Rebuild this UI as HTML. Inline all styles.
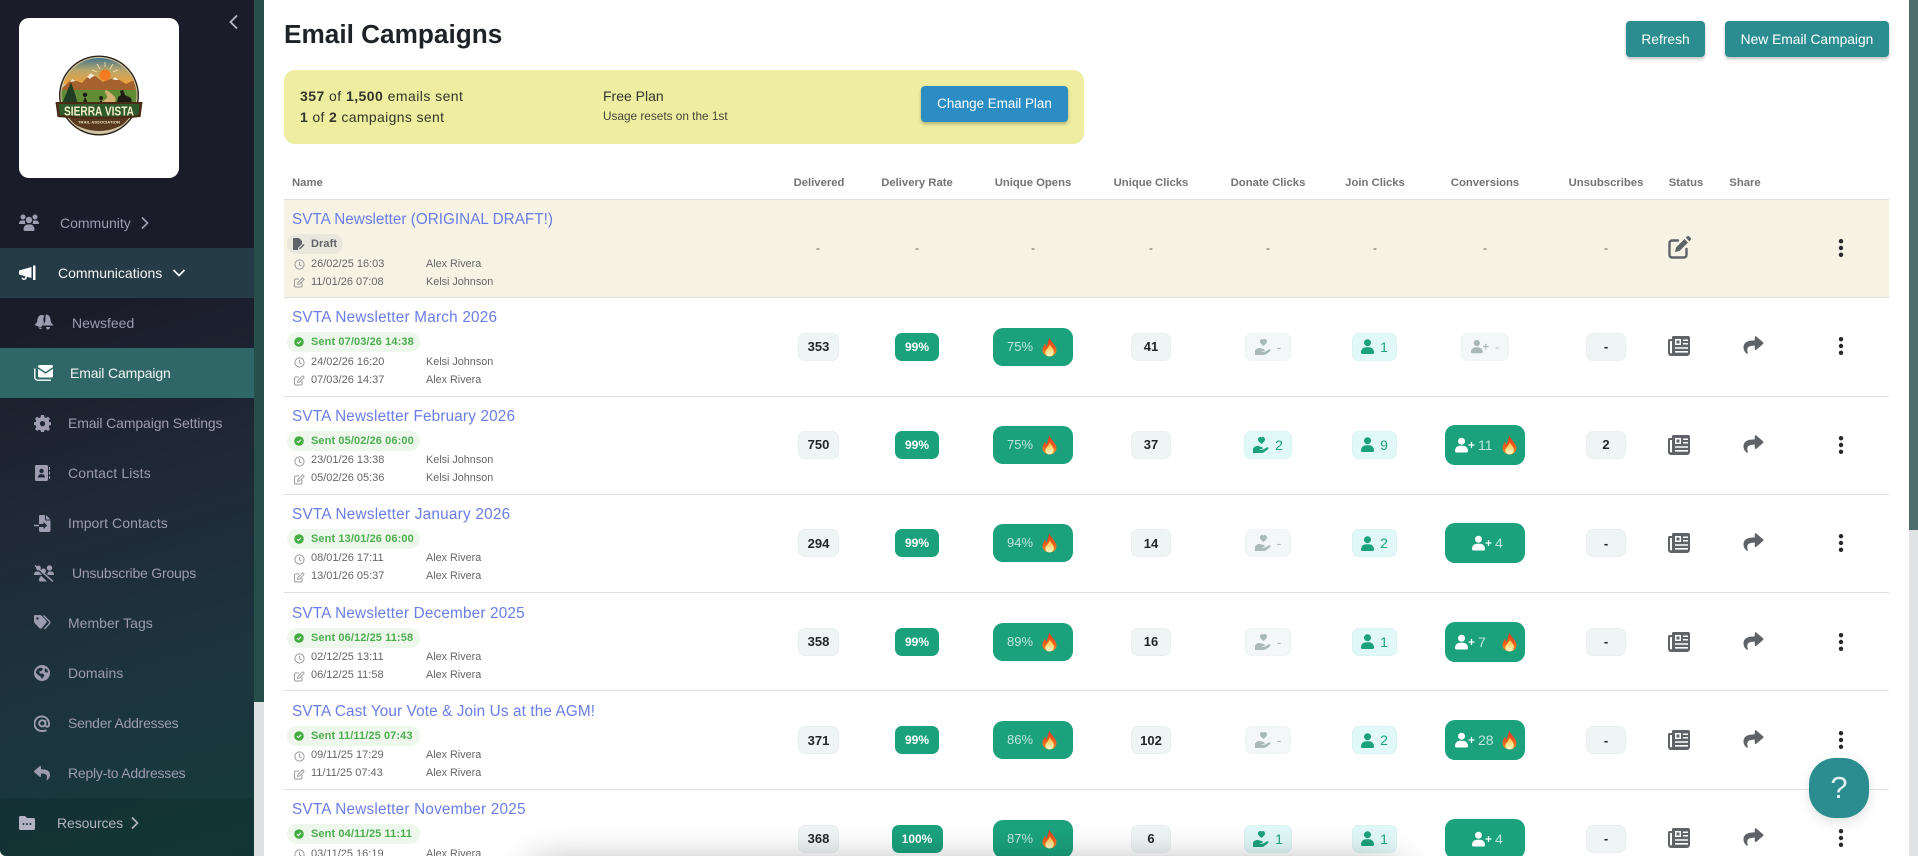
<!DOCTYPE html>
<html lang="en">
<head>
<meta charset="utf-8">
<title>Email Campaigns</title>
<style>
*{box-sizing:border-box}
html,body{margin:0;padding:0;width:1918px;height:856px;background:#fff;font-family:"Liberation Sans",sans-serif}
#page{position:relative;width:1918px;height:856px;overflow:hidden;background:#fff}
.abs{position:absolute}
#side{position:absolute;left:0;top:0;width:254px;height:856px;background:linear-gradient(163deg,#1b1b29 0%,#1b1c2a 36%,#202a37 58%,#1d333c 75%,#143c3c 100%);border-bottom-left-radius:6px;overflow:hidden}
.st{position:absolute;font-size:14px;line-height:20px;color:#9d9cb1;white-space:nowrap}
.w{color:#f4f5f6}
.si{position:absolute;fill:#9d9cb1}
.r{position:absolute;left:0;width:1918px;height:98.4px}
.ln{position:absolute;left:284px;width:1605px;height:1px;background:#e0e0e0}
.ti{position:absolute;left:292px;top:11px;font-size:15.300px;line-height:20px;color:#6a7de6;white-space:nowrap}
.pl{position:absolute;left:287px;top:35px;height:20px;border-radius:10px;background:#eef7ec;width:133px}
.pl span{position:absolute;left:24px;top:0;font-size:11px;line-height:21px;font-weight:bold;color:#4eae50;white-space:nowrap;letter-spacing:.1px}
.pl svg{position:absolute;left:7px;top:5px}
.m{position:absolute;font-size:11px;line-height:14px;color:#666;white-space:nowrap}
.m1{top:57.200px}.m2{top:75.200px}
.dt{left:311px}.nm{left:426px;font-size:10.800px}
.ci{position:absolute;left:294px}
.c1{top:60px}.c2{top:78px}
.c{position:absolute;top:35.200px;height:28px;border-radius:7px;display:flex;align-items:center;justify-content:center;font-size:13px;font-weight:bold;color:#23262a;background:#eff4f4;border:1px solid #e9efef}
.d1{left:798px;width:41px}
.d2{left:895px;width:44px;background:#1ba27d;border:0;color:#fff;font-size:12px}
.d4{left:1131px;width:40px}
.d8{left:1586px;width:40px}
.hd,.hg{left:1244px;width:48px;gap:6px;font-weight:normal;font-size:14px}
.hd{background:#e0f8f7;border-color:#d9f4f2;color:#1ba27d}
.hg{background:#f4f7f7;border-color:#eff3f3;color:#a9bab6;left:1245px;width:46px}
.j{left:1352px;width:45px;background:#e0f8f7;border-color:#d9f4f2;color:#1ba27d;gap:6px;font-size:14px;font-weight:normal}
.pg{left:1461px;width:48px;background:#f4f7f7;border-color:#eff3f3;color:#a9bab6;gap:6px;font-size:12px;font-weight:normal}
.o{position:absolute;left:993px;top:30.200px;width:80px;height:38px;border-radius:10px;background:#1ba27d}
.o span{position:absolute;left:14px;top:0;line-height:38px;font-size:13px;color:#bfe6da}
.o svg{position:absolute;left:49px;top:9px}
.p{position:absolute;left:1445px;top:29.200px;width:80px;height:40px;border-radius:10px;background:#1ba27d}
.p span{position:absolute;top:0;line-height:40px;font-size:14px;color:#bfe6da}
.p .f{position:absolute;left:57px;top:10px}
.p .u{position:absolute;left:10px;top:12px}
.p.nf .u{left:27px}
.nws{position:absolute;left:1668px;top:39px}
.shr{position:absolute;left:1743px;top:38px}
.dot{position:absolute;left:1837px;top:40px}
.h{position:absolute;top:176px;width:120px;text-align:center;font-size:11.300px;line-height:14px;font-weight:bold;color:#737373;white-space:nowrap}
.dash{position:absolute;top:42px;width:40px;text-align:center;font-size:12px;line-height:14px;color:#555}
.btn{position:absolute;border-radius:4px;color:#fff;font-size:13.800px;display:flex;align-items:center;justify-content:center;background:#2b8d8f;box-shadow:0 2px 3px rgba(0,0,0,.25)}
</style>
</head>
<body>
<div id="page">
<svg width="0" height="0" style="position:absolute">
<defs>
<linearGradient id="fg" x1="0" y1="0" x2="0" y2="1"><stop offset="0" stop-color="#e2381f"/><stop offset=".6" stop-color="#f0601e"/><stop offset="1" stop-color="#fa9a22"/></linearGradient>
<linearGradient id="fy" x1="0" y1="0" x2="0" y2="1"><stop offset="0" stop-color="#fcc02e"/><stop offset="1" stop-color="#fffbd0"/></linearGradient>
<symbol id="fire" viewBox="0 0 16 20"><path fill="url(#fg)" d="M8 0C9 4 14 7 15.300 12C16.200 17 12.400 20 8 20C3.800 20 -.2 17 .6 12C1 9.600 2.400 8 3 6.200C3.900 7.600 4.400 8.800 5 9.600C6 7 6.400 3 8 0Z"/><path fill="url(#fy)" d="M8.200 7C9.600 10 13.200 12.500 12.600 16C12 19 10 20 8 20C5.700 20 3.400 18.400 3.600 15.600C3.800 13 7.400 11 8.200 7Z"/></symbol>
<symbol id="clock" viewBox="0 0 11 11"><circle cx="5.500" cy="5.500" r="4.600" fill="none" stroke="#9a9a9a" stroke-width="1"/><path d="M5.500 2.800V5.800L7.600 7" fill="none" stroke="#9a9a9a" stroke-width="1"/></symbol>
<symbol id="edit" viewBox="0 0 11 11"><path d="M8 5.800V9a1 1 0 0 1-1 1H1.500a1 1 0 0 1-1-1V3a1 1 0 0 1 1-1H5" fill="none" stroke="#9a9a9a" stroke-width="1"/><path d="M3.600 7.400L4 5.400L8.600 .8L10.200 2.400L5.600 7Z" fill="none" stroke="#9a9a9a" stroke-width=".9"/></symbol>
<symbol id="chk" viewBox="0 0 10 10"><circle cx="5" cy="5" r="4.800" fill="#44ad42"/><path d="M2.900 5.100L4.400 6.500L7.100 3.700" fill="none" stroke="#fff" stroke-width="1.100"/></symbol>
<symbol id="news" viewBox="0 0 22 20"><path fill="#5f6368" d="M5.500 0H20a2 2 0 0 1 2 2V17a3 3 0 0 1-3 3H3a3 3 0 0 1-3-3V4.500a1.500 1.500 0 0 1 1.500-1.500H4V1.500A1.500 1.500 0 0 1 5.500 0Z"/><path fill="#fff" d="M2 5H4V16.500a1 1 0 0 1-2 0ZM7 3H13V9H7ZM15 3.500H20V5H15ZM15 7H20V8.500H15ZM7 11.200H20V12.800H7ZM7 15H20V16.600H7Z"/><path fill="#5f6368" d="M8.500 4.500H11.500V7.500H8.500Z"/></symbol>
<symbol id="share" viewBox="0 0 512 512"><path fill="#5f6368" d="M503.691 189.836L327.687 37.851C312.281 24.546 288 35.347 288 56.015v80.053C127.371 137.907 0 170.1 0 322.326c0 61.441 39.581 122.309 83.333 154.132 13.653 9.931 33.111-2.533 28.077-18.631C66.066 312.814 132.917 274.316 288 272.085V360c0 20.7 24.3 31.453 39.687 18.164l176.004-152c11.071-9.562 11.086-26.753 0-36.328z"/></symbol>
<symbol id="dots" viewBox="0 0 8 18"><circle cx="4" cy="2.200" r="2.200" fill="#26282c"/><circle cx="4" cy="9" r="2.200" fill="#26282c"/><circle cx="4" cy="15.800" r="2.200" fill="#26282c"/></symbol>
<symbol id="hand" viewBox="0 0 16 18"><path d="M8.500 8C6.500 6.400 5 5.200 5 3.400C5 1.900 6.100 1 7.200 1C7.800 1 8.200 1.300 8.500 1.700C8.800 1.300 9.200 1 9.800 1C10.900 1 12 1.900 12 3.400C12 5.200 10.500 6.400 8.500 8Z" fill="currentColor"/><path fill="currentColor" d="M0 12.500C1.500 10.200 4 9.500 6.500 10.400L9 11.200C10.200 11.600 9.800 13.200 8.600 13H6.800V13.600H10L13.800 11.400C15.200 10.800 16.200 12.300 15 13.300L11 16.300C10.300 16.800 9.600 17 8.800 17H0Z"/></symbol>
<symbol id="user" viewBox="0 0 13 15"><circle cx="6.500" cy="3.700" r="3.500" fill="currentColor"/><path fill="currentColor" d="M0 13.500C0 10.300 2.500 8.300 5 8.300H8C10.500 8.300 13 10.300 13 13.500C13 14.400 12.400 15 11.600 15H1.400C.6 15 0 14.400 0 13.500Z"/></symbol>
<symbol id="userp" viewBox="0 0 20 15"><circle cx="6.500" cy="3.700" r="3.500" fill="currentColor"/><path fill="currentColor" d="M0 13.500C0 10.300 2.500 8.300 5 8.300H8C10.500 8.300 13 10.300 13 13.500C13 14.400 12.400 15 11.600 15H1.400C.6 15 0 14.400 0 13.500Z"/><path d="M16.500 4.500V10.500M13.500 7.500H19.500" stroke="currentColor" stroke-width="1.300"/></symbol>
</defs>
</svg>

<!-- sidebar -->
<div id="side">
  <div style="position:absolute;left:19px;top:18px;width:160px;height:160px;background:#fff;border-radius:10px"></div>
  <svg style="position:absolute;left:19px;top:18px" width="160" height="160" viewBox="19 18 160 160">
    <defs>
      <clipPath id="lc"><circle cx="99" cy="95.500" r="37.500"/></clipPath>
      <linearGradient id="sky" x1="0" y1="0" x2="0" y2="1"><stop offset="0" stop-color="#2f6f94"/><stop offset=".5" stop-color="#b7a66a"/><stop offset="1" stop-color="#f0a13c"/></linearGradient>
    </defs>
    <circle cx="99" cy="95.500" r="40" fill="#2b2219"/>
    <circle cx="99" cy="95.500" r="38.600" fill="#cfc4a4"/>
    <g clip-path="url(#lc)">
      <rect x="60" y="56" width="78" height="28" fill="url(#sky)"/>
      <circle cx="105" cy="75" r="5.500" fill="#f47b20"/>
      <path d="M105 62V67M97 64L100 69M113 64L110 69M92 70L97 72M118 70L113 72" stroke="#f6e6b0" stroke-width=".8"/>
      <path d="M60 90L72 79L82 83L91 73L103 82L115 77L126 84L134 80L140 92V96H60Z" fill="#a5622f"/>
      <path d="M87 77L91 73L95 76L92 77L90 79ZM112 79L115 77L119 80L115 80ZM76 81L72 79L70 82Z" fill="#efe6d2"/>
      <rect x="60" y="90" width="78" height="20" fill="#5f8c34"/>
      <path d="M106 90C102 93 110 95 106 99C101 103 94 105 90 110H116C112 104 118 100 114 96C112 94 110 92 106 90Z" fill="#d3b070"/>
      <path d="M71 82L75 94L78 104H62L66 94Z" fill="#1f3d22"/>
      <path d="M85 97a2.200 2.200 0 1 1 .1 0L90 108H81ZM101 100a2 2 0 1 1 .1 0L106 108H95Z" fill="#1e1a14"/>
      <path d="M116 108L118 97L121 95L120 91L123 90L125 95L131 98L133 108Z" fill="#1e1a14"/>
    </g>
    <path d="M62 116Q99 146 136 116V112H62Z" fill="#5a3a1e" clip-path="url(#lc)"/>
    <path d="M55.500 102L142.500 102L140.500 117Q99 121 57.500 117Z" fill="#4a2c16"/>
    <path d="M58.500 104L139.500 104L138.300 115Q99 118.500 59.700 115Z" fill="#2f5a2a"/>
    <text x="99" y="115.500" text-anchor="middle" font-family="Liberation Sans" font-weight="bold" font-size="12.500" fill="#f3edc6" textLength="70" lengthAdjust="spacingAndGlyphs">SIERRA VISTA</text>
    <text x="99" y="123.500" text-anchor="middle" font-family="Liberation Sans" font-weight="bold" font-size="4" fill="#e8dfc0" textLength="42" lengthAdjust="spacingAndGlyphs">TRAIL ASSOCIATION</text>
  </svg>
  <svg style="position:absolute;left:228px;top:14px" width="11" height="16" viewBox="0 0 11 16"><path d="M9 1.500L2.500 8L9 14.500" fill="none" stroke="#b6b6c2" stroke-width="1.800"/></svg>

  <div style="position:absolute;left:0;top:248px;width:254px;height:50px;background:#253b45"></div>
  <div style="position:absolute;left:0;top:348px;width:254px;height:50px;background:#2f6666"></div>
  <div style="position:absolute;left:0;top:798px;width:254px;height:58px;background:rgba(10,30,32,.22)"></div>

  <!-- community -->
  <svg class="si" style="left:19px;top:214px" width="20" height="18" viewBox="0 0 20 18"><circle cx="4" cy="3" r="2.500"/><circle cx="16" cy="3" r="2.500"/><circle cx="10" cy="6" r="3.200"/><path d="M0 9.500C0 7.500 1.500 6.500 3 6.500H5C5.500 6.500 6 6.700 6.200 7C5.800 8 6 9 6.500 10H1C.5 10 0 10 0 9.500ZM20 9.500C20 7.500 18.500 6.500 17 6.500H15C14.500 6.500 14 6.700 13.800 7C14.200 8 14 9 13.500 10H19C19.500 10 20 10 20 9.500ZM4.500 15.500C4.500 12.500 6.500 10.500 8.500 10.500H11.500C13.500 10.500 15.500 12.500 15.500 15.500C15.500 16.500 15 17 14 17H6C5 17 4.500 16.500 4.500 15.500Z"/></svg>
  <div class="st" style="left:60px;top:213px">Community</div>
  <svg style="position:absolute;left:140px;top:216px" width="10" height="14" viewBox="0 0 10 14"><path d="M2 1.500L7.500 7L2 12.500" fill="none" stroke="#9d9cb1" stroke-width="1.700"/></svg>

  <!-- communications -->
  <svg style="position:absolute;left:19px;top:265px" width="19" height="16" viewBox="0 0 19 16"><path fill="#fff" d="M0 5.500L12.500 2V13L8 11.800C8 14 6.500 15 5 15C3.500 15 2.700 14 2.500 12.500L4.200 12.900C4.300 13.500 4.700 13.600 5 13.600C5.700 13.600 6.300 13 6.300 11.300L0 9.500ZM14 .5H16.500V15H14Z"/></svg>
  <div class="st w" style="left:58px;top:263px">Communications</div>
  <svg style="position:absolute;left:172px;top:268px" width="14" height="10" viewBox="0 0 14 10"><path d="M1.500 2L7 7.500L12.500 2" fill="none" stroke="#f4f5f6" stroke-width="1.700"/></svg>

  <!-- newsfeed -->
  <svg class="si" style="left:34px;top:314px" width="20" height="16" viewBox="0 0 20 16"><path d="M8 1C4.500 1 3.500 4 3.300 6.500C3.200 8.500 1.500 10 .5 11L7 13.500C8 12 9 10 10 9C9.200 7 9 4 10.500 1.800C9.800 1.300 9 1 8 1Z"/><path d="M12 .5C15 .5 16.400 3 16.600 6.500C16.700 8.500 18.500 10 19.500 11.500H8.500C9.500 10 11.300 8.500 11.400 6.500C11.400 5 11.400 2 12 .5ZM12 13H16C16 14.500 15 15.500 14 15.500C13 15.500 12 14.500 12 13ZM4.500 13L8 14.500C7.500 15.500 5 15.500 4.500 13Z"/></svg>
  <div class="st" style="left:72px;top:313px">Newsfeed</div>

  <!-- email -->
  <svg style="position:absolute;left:34px;top:365px" width="19" height="16" viewBox="0 0 19 16"><path fill="#fff" d="M4 1.500A1.500 1.500 0 0 1 5.500 0H17.500A1.500 1.500 0 0 1 19 1.500V2L11.500 7L4 2ZM4 3.800L11.500 8.800L19 3.800V11A1.500 1.500 0 0 1 17.500 12.500H5.500A1.500 1.500 0 0 1 4 11Z"/><path fill="none" stroke="#fff" stroke-width="1.400" d="M.8 3.500V12.500A2.800 2.800 0 0 0 3.600 15.200H17"/></svg>
  <div class="st w" style="left:70px;top:363px;letter-spacing:-.15px">Email Campaign</div>

  <!-- gear -->
  <svg class="si" style="left:34px;top:415px" width="17" height="17" viewBox="0 0 17 17"><path fill-rule="evenodd" d="M7 0H10L10.400 2.300L12 3L14 1.700L16 3.700L14.700 5.600L15.300 7L17 7.300V10L15.300 10.400L14.700 12L16 14L14 16L12 14.700L10.400 15.300L10 17H7L6.600 15.300L5 14.700L3 16L1 14L2.300 12L1.700 10.400L0 10V7.300L1.700 7L2.300 5.600L1 3.700L3 1.700L5 3L6.600 2.300ZM8.500 6A2.600 2.600 0 1 0 8.500 11.200A2.600 2.600 0 1 0 8.500 6Z"/></svg>
  <div class="st" style="left:68px;top:413px;letter-spacing:-.12px">Email Campaign Settings</div>

  <!-- contact -->
  <svg class="si" style="left:35px;top:465px" width="15" height="16" viewBox="0 0 15 16"><path fill-rule="evenodd" d="M1.500 0H11.500A1.500 1.500 0 0 1 13 1.500V14.500A1.500 1.500 0 0 1 11.500 16H1.500A1.500 1.500 0 0 1 0 14.500V1.500A1.500 1.500 0 0 1 1.500 0ZM6.500 3.800A2.200 2.200 0 1 0 6.500 8.200A2.200 2.200 0 1 0 6.500 3.800ZM3 12.500H10C10 10.500 8.800 9.200 7.500 9.200H5.500C4.200 9.200 3 10.500 3 12.500Z"/><path d="M14 2H15V5H14ZM14 6.500H15V9.500H14ZM14 11H15V14H14Z"/></svg>
  <div class="st" style="left:68px;top:463px;letter-spacing:.15px">Contact Lists</div>

  <!-- import -->
  <svg class="si" style="left:34px;top:515px" width="17" height="17" viewBox="0 0 17 17"><path d="M5 1.500A1.500 1.500 0 0 1 6.500 0H11V4.500A1 1 0 0 0 12 5.500H16.500V15.500A1.500 1.500 0 0 1 15 17H6.500A1.500 1.500 0 0 1 5 15.500V12H9.500V14L13.200 10.500L9.500 7V9H5Z"/><path d="M12 0L16.500 4.500H12ZM0 9.800H5V11.200H0Z"/></svg>
  <div class="st" style="left:68px;top:513px;letter-spacing:.07px">Import Contacts</div>

  <!-- unsubscribe -->
  <svg class="si" style="left:34px;top:565px" width="20" height="17" viewBox="0 0 20 17"><circle cx="15.500" cy="3" r="2.700"/><circle cx="4.500" cy="3" r="2.400"/><circle cx="9.500" cy="6" r="2.500"/><path d="M0 9.500C0 7.500 1.500 6.500 3 6.500H5L8 10H1C.5 10 0 10 0 9.500ZM20 9.500C20 7.500 18.500 6.500 17 6.500H14.500L13 9L14 10H19C19.500 10 20 10 20 9.500ZM5 15.500C5 13 6 11.500 7.500 11L13 16.500H6C5.500 16.500 5 16 5 15.500ZM12 11C14 11 15.500 13 15.500 14.500L12.500 11.500Z"/><path d="M1 .5L19 16.500" stroke="#9d9cb1" stroke-width="1.500"/></svg>
  <div class="st" style="left:72px;top:563px;letter-spacing:-.2px">Unsubscribe Groups</div>

  <!-- tags -->
  <svg class="si" style="left:34px;top:615px" width="17" height="15" viewBox="0 0 17 15"><path fill-rule="evenodd" d="M0 1.200A1.200 1.200 0 0 1 1.200 0H6A2 2 0 0 1 7.400 .6L12 5.200A2 2 0 0 1 12 8L8 13A2 2 0 0 1 5.200 13L.6 8A2 2 0 0 1 0 6.500ZM3.500 2.300A1.200 1.200 0 1 0 3.500 4.700A1.200 1.200 0 1 0 3.500 2.300Z"/><path fill="none" stroke="#9d9cb1" stroke-width="1.400" d="M9.500 .5L15.300 6.300A1.800 1.800 0 0 1 15.300 8.700L10.500 14"/></svg>
  <div class="st" style="left:68px;top:613px;letter-spacing:.02px">Member Tags</div>

  <!-- globe -->
  <svg class="si" style="left:34px;top:665px" width="16" height="16" viewBox="0 0 16 16"><path fill-rule="evenodd" d="M8 0A8 8 0 1 0 8 16A8 8 0 1 0 8 0ZM4 3.500L7 2.500L9 4L7.500 6L5 6.500L6 8.500L9 8.500L10.500 10.500L8 14L6.500 11.500L3.500 9.500L1.800 7.500C2 6 2.800 4.500 4 3.500ZM11 3L13.500 5L14 7.500L11.500 7.500L10.500 5.500Z"/></svg>
  <div class="st" style="left:68px;top:663px">Domains</div>

  <!-- at -->
  <svg style="position:absolute;left:34px;top:715px" width="16" height="17" viewBox="0 0 16 17"><path fill="none" stroke="#9d9cb1" stroke-width="1.900" d="M12.500 15.200C11.200 15.800 9.800 16 8.500 16A7.300 7.300 0 1 1 15 8.500V9.800C15 11 14.200 11.800 13.200 11.800C12.200 11.800 11.400 11 11.400 9.800V5.200M11.400 8.400A3.100 3.100 0 1 1 5.200 8.400A3.100 3.100 0 1 1 11.400 8.400Z"/></svg>
  <div class="st" style="left:68px;top:713px;letter-spacing:-.25px">Sender Addresses</div>

  <!-- reply -->
  <svg class="si" style="left:34px;top:765px" width="16" height="16" viewBox="0 0 512 512"><path d="M8.309 189.836L184.313 37.851C199.719 24.546 224 35.347 224 56.015v80.053c160.629 1.839 288 34.032 288 186.258 0 61.441-39.581 122.309-83.333 154.132-13.653 9.931-33.111-2.533-28.077-18.631 45.344-145.012-21.507-183.51-176.59-185.742V360c0 20.7-24.3 31.453-39.687 18.164l-176.004-152c-11.071-9.562-11.086-26.753 0-36.328z"/></svg>
  <div class="st" style="left:68px;top:763px;letter-spacing:-.22px">Reply-to Addresses</div>

  <!-- resources -->
  <svg class="si" style="left:19px;top:816px;fill:#b3b3c3" width="16" height="14" viewBox="0 0 16 14"><path fill-rule="evenodd" d="M1.500 0H6L8 2H14.500A1.500 1.500 0 0 1 16 3.500V12.500A1.500 1.500 0 0 1 14.500 14H1.500A1.500 1.500 0 0 1 0 12.500V1.500A1.500 1.500 0 0 1 1.500 0ZM4.500 7A1 1 0 1 0 4.500 9A1 1 0 1 0 4.500 7ZM8 7A1 1 0 1 0 8 9A1 1 0 1 0 8 7ZM11.500 7A1 1 0 1 0 11.500 9A1 1 0 1 0 11.500 7Z"/></svg>
  <div class="st" style="left:57px;top:813px;color:#b3b3c3;letter-spacing:-.1px">Resources</div>
  <svg style="position:absolute;left:130px;top:816px" width="10" height="14" viewBox="0 0 10 14"><path d="M2 1.500L7.500 7L2 12.500" fill="none" stroke="#b3b3c3" stroke-width="1.700"/></svg>
</div>

<!-- strips -->
<div class="abs" style="left:254px;top:0;width:10px;height:702px;background:#264f4c"></div>
<div class="abs" style="left:254px;top:702px;width:10px;height:154px;background:#dfe0e2"></div>
<div class="abs" style="left:1909px;top:0;width:9px;height:530px;background:#4e6e6d"></div>
<div class="abs" style="left:1909px;top:530px;width:9px;height:326px;background:#e1e2e4"></div>

<!-- header -->
<div class="abs" style="left:284px;top:16px;font-size:26.200px;line-height:37px;font-weight:bold;color:#1f2328;white-space:nowrap">Email Campaigns</div>
<div class="btn" style="left:1626px;top:21px;width:79px;height:36px">Refresh</div>
<div class="btn" style="left:1725px;top:21px;width:164px;height:36px">New Email Campaign</div>

<!-- plan banner -->
<div class="abs" style="left:284px;top:70px;width:800px;height:74px;border-radius:11px;background:#efed9f"></div>
<div class="abs" style="left:300px;top:87px;font-size:14px;line-height:18px;color:#33342c;letter-spacing:.45px;white-space:nowrap"><b>357</b> of <b>1,500</b> emails sent</div>
<div class="abs" style="left:300px;top:108px;font-size:14px;line-height:18px;color:#33342c;letter-spacing:.35px;white-space:nowrap"><b>1</b> of <b>2</b> campaigns sent</div>
<div class="abs" style="left:603px;top:87px;font-size:14px;line-height:18px;color:#33342c;white-space:nowrap">Free Plan</div>
<div class="abs" style="left:603px;top:108px;font-size:11.800px;line-height:16px;color:#44453c;white-space:nowrap">Usage resets on the 1st</div>
<div class="btn" style="left:921px;top:86px;width:147px;height:36px;background:#2b8dc4;font-size:13.400px;padding-bottom:2px">Change Email Plan</div>

<!-- table header -->
<div class="h" style="left:292px;width:40px;text-align:left">Name</div>
<div class="h" style="left:759px">Delivered</div>
<div class="h" style="left:857px">Delivery Rate</div>
<div class="h" style="left:973px">Unique Opens</div>
<div class="h" style="left:1091px">Unique Clicks</div>
<div class="h" style="left:1208px">Donate Clicks</div>
<div class="h" style="left:1315px">Join Clicks</div>
<div class="h" style="left:1425px">Conversions</div>
<div class="h" style="left:1546px">Unsubscribes</div>
<div class="h" style="left:1626px">Status</div>
<div class="h" style="left:1685px">Share</div>

<!-- draft row bg + lines -->
<div class="abs" style="left:284px;top:199px;width:1605px;height:98px;background:#f6f3e5"></div>
<div class="ln" style="top:199px"></div>
<div class="ln" style="top:297px"></div>
<div class="ln" style="top:396px"></div>
<div class="ln" style="top:494px"></div>
<div class="ln" style="top:592px"></div>
<div class="ln" style="top:690px"></div>
<div class="ln" style="top:789px"></div>

<!-- draft row -->
<div class="r" style="top:199.400px">
  <div class="ti">SVTA Newsletter (ORIGINAL DRAFT!)</div>
  <div class="pl" style="background:#e9e7dc;width:56px"><svg width="12" height="12" viewBox="0 0 12 12" style="left:6px;top:4px"><path fill="#5f6368" d="M1 0H6L9 3V6L5 10V12H1A1 1 0 0 1 0 11V1A1 1 0 0 1 1 0Z"/><path d="M6.500 11L11 6.500" stroke="#5f6368" stroke-width="1.500"/></svg><span style="color:#5f6368">Draft</span></div>
  <svg class="ci c1" width="11" height="11"><use href="#clock"/></svg>
  <div class="m m1 dt">26/02/25 16:03</div><div class="m m1 nm">Alex Rivera</div>
  <svg class="ci c2" width="11" height="11"><use href="#edit"/></svg>
  <div class="m m2 dt">11/01/26 07:08</div><div class="m m2 nm">Kelsi Johnson</div>
  <div class="dash" style="left:798px">-</div>
  <div class="dash" style="left:897px">-</div>
  <div class="dash" style="left:1013px">-</div>
  <div class="dash" style="left:1131px">-</div>
  <div class="dash" style="left:1248px">-</div>
  <div class="dash" style="left:1355px">-</div>
  <div class="dash" style="left:1465px">-</div>
  <div class="dash" style="left:1586px">-</div>
  <svg style="position:absolute;left:1668px;top:37px" width="23" height="23" viewBox="0 0 23 23"><path fill="none" stroke="#5f6368" stroke-width="2.400" stroke-linecap="round" d="M18.500 13V19A2.500 2.500 0 0 1 16 21.500H4A2.500 2.500 0 0 1 1.500 19V7A2.500 2.500 0 0 1 4 4.500H10"/><path fill="#5f6368" d="M7 16L8 11.500L16.500 3L20 6.500L11.500 15ZM17.800 1.700L19 .5A1.500 1.500 0 0 1 21.200 .5L22.500 1.800A1.500 1.500 0 0 1 22.500 4L21.300 5.200Z"/></svg>
  <svg class="dot" width="8" height="18"><use href="#dots"/></svg>
</div>

<!-- row: March -->
<div class="r" style="top:297.400px">
  <div class="ti" style="letter-spacing:.22px">SVTA Newsletter March 2026</div>
  <div class="pl"><svg width="10" height="10"><use href="#chk"/></svg><span>Sent 07/03/26 14:38</span></div>
  <svg class="ci c1" width="11" height="11"><use href="#clock"/></svg>
  <div class="m m1 dt">24/02/26 16:20</div><div class="m m1 nm">Kelsi Johnson</div>
  <svg class="ci c2" width="11" height="11"><use href="#edit"/></svg>
  <div class="m m2 dt">07/03/26 14:37</div><div class="m m2 nm">Alex Rivera</div>
  <div class="c d1">353</div>
  <div class="c d2">99%</div>
  <div class="o"><span>75%</span><svg width="15" height="20"><use href="#fire"/></svg></div>
  <div class="c d4">41</div>
  <div class="c hg"><svg width="16" height="18"><use href="#hand"/></svg>-</div>
  <div class="c j"><svg width="13" height="15"><use href="#user"/></svg>1</div>
  <div class="c pg"><svg width="18" height="15"><use href="#userp"/></svg>-</div>
  <div class="c d8">-</div>
  <svg class="nws" width="22" height="20"><use href="#news"/></svg>
  <svg class="shr" width="21" height="20"><use href="#share"/></svg>
  <svg class="dot" width="8" height="18"><use href="#dots"/></svg>
</div>

<!-- row: February -->
<div class="r" style="top:395.800px">
  <div class="ti" style="letter-spacing:.17px">SVTA Newsletter February 2026</div>
  <div class="pl"><svg width="10" height="10"><use href="#chk"/></svg><span>Sent 05/02/26 06:00</span></div>
  <svg class="ci c1" width="11" height="11"><use href="#clock"/></svg>
  <div class="m m1 dt">23/01/26 13:38</div><div class="m m1 nm">Kelsi Johnson</div>
  <svg class="ci c2" width="11" height="11"><use href="#edit"/></svg>
  <div class="m m2 dt">05/02/26 05:36</div><div class="m m2 nm">Kelsi Johnson</div>
  <div class="c d1">750</div>
  <div class="c d2">99%</div>
  <div class="o"><span>75%</span><svg width="15" height="20"><use href="#fire"/></svg></div>
  <div class="c d4">37</div>
  <div class="c hd"><svg width="16" height="18"><use href="#hand"/></svg>2</div>
  <div class="c j"><svg width="13" height="15"><use href="#user"/></svg>9</div>
  <div class="p"><svg class="u" width="20" height="16" style="color:#fff"><use href="#userp"/></svg><span style="left:33px">11</span><svg class="f" width="15" height="20"><use href="#fire"/></svg></div>
  <div class="c d8">2</div>
  <svg class="nws" width="22" height="20"><use href="#news"/></svg>
  <svg class="shr" width="21" height="20"><use href="#share"/></svg>
  <svg class="dot" width="8" height="18"><use href="#dots"/></svg>
</div>

<!-- row: January -->
<div class="r" style="top:494.200px">
  <div class="ti" style="letter-spacing:.25px">SVTA Newsletter January 2026</div>
  <div class="pl"><svg width="10" height="10"><use href="#chk"/></svg><span>Sent 13/01/26 06:00</span></div>
  <svg class="ci c1" width="11" height="11"><use href="#clock"/></svg>
  <div class="m m1 dt">08/01/26 17:11</div><div class="m m1 nm">Alex Rivera</div>
  <svg class="ci c2" width="11" height="11"><use href="#edit"/></svg>
  <div class="m m2 dt">13/01/26 05:37</div><div class="m m2 nm">Alex Rivera</div>
  <div class="c d1">294</div>
  <div class="c d2">99%</div>
  <div class="o"><span>94%</span><svg width="15" height="20"><use href="#fire"/></svg></div>
  <div class="c d4">14</div>
  <div class="c hg"><svg width="16" height="18"><use href="#hand"/></svg>-</div>
  <div class="c j"><svg width="13" height="15"><use href="#user"/></svg>2</div>
  <div class="p nf"><svg class="u" width="20" height="16" style="color:#fff"><use href="#userp"/></svg><span style="left:50px">4</span></div>
  <div class="c d8">-</div>
  <svg class="nws" width="22" height="20"><use href="#news"/></svg>
  <svg class="shr" width="21" height="20"><use href="#share"/></svg>
  <svg class="dot" width="8" height="18"><use href="#dots"/></svg>
</div>

<!-- row: December -->
<div class="r" style="top:592.600px">
  <div class="ti" style="letter-spacing:.18px">SVTA Newsletter December 2025</div>
  <div class="pl"><svg width="10" height="10"><use href="#chk"/></svg><span>Sent 06/12/25 11:58</span></div>
  <svg class="ci c1" width="11" height="11"><use href="#clock"/></svg>
  <div class="m m1 dt">02/12/25 13:11</div><div class="m m1 nm">Alex Rivera</div>
  <svg class="ci c2" width="11" height="11"><use href="#edit"/></svg>
  <div class="m m2 dt">06/12/25 11:58</div><div class="m m2 nm">Alex Rivera</div>
  <div class="c d1">358</div>
  <div class="c d2">99%</div>
  <div class="o"><span>89%</span><svg width="15" height="20"><use href="#fire"/></svg></div>
  <div class="c d4">16</div>
  <div class="c hg"><svg width="16" height="18"><use href="#hand"/></svg>-</div>
  <div class="c j"><svg width="13" height="15"><use href="#user"/></svg>1</div>
  <div class="p"><svg class="u" width="20" height="16" style="color:#fff"><use href="#userp"/></svg><span style="left:33px">7</span><svg class="f" width="15" height="20"><use href="#fire"/></svg></div>
  <div class="c d8">-</div>
  <svg class="nws" width="22" height="20"><use href="#news"/></svg>
  <svg class="shr" width="21" height="20"><use href="#share"/></svg>
  <svg class="dot" width="8" height="18"><use href="#dots"/></svg>
</div>

<!-- row: AGM -->
<div class="r" style="top:691px">
  <div class="ti" style="letter-spacing:.12px">SVTA Cast Your Vote &amp; Join Us at the AGM!</div>
  <div class="pl"><svg width="10" height="10"><use href="#chk"/></svg><span>Sent 11/11/25 07:43</span></div>
  <svg class="ci c1" width="11" height="11"><use href="#clock"/></svg>
  <div class="m m1 dt">09/11/25 17:29</div><div class="m m1 nm">Alex Rivera</div>
  <svg class="ci c2" width="11" height="11"><use href="#edit"/></svg>
  <div class="m m2 dt">11/11/25 07:43</div><div class="m m2 nm">Alex Rivera</div>
  <div class="c d1">371</div>
  <div class="c d2">99%</div>
  <div class="o"><span>86%</span><svg width="15" height="20"><use href="#fire"/></svg></div>
  <div class="c d4">102</div>
  <div class="c hg"><svg width="16" height="18"><use href="#hand"/></svg>-</div>
  <div class="c j"><svg width="13" height="15"><use href="#user"/></svg>2</div>
  <div class="p"><svg class="u" width="20" height="16" style="color:#fff"><use href="#userp"/></svg><span style="left:33px">28</span><svg class="f" width="15" height="20"><use href="#fire"/></svg></div>
  <div class="c d8">-</div>
  <svg class="nws" width="22" height="20"><use href="#news"/></svg>
  <svg class="shr" width="21" height="20"><use href="#share"/></svg>
  <svg class="dot" width="8" height="18"><use href="#dots"/></svg>
</div>

<!-- row: November -->
<div class="r" style="top:789.400px;height:66.600px;overflow:hidden">
  <div class="ti" style="letter-spacing:.21px">SVTA Newsletter November 2025</div>
  <div class="pl"><svg width="10" height="10"><use href="#chk"/></svg><span>Sent 04/11/25 11:11</span></div>
  <svg class="ci c1" width="11" height="11"><use href="#clock"/></svg>
  <div class="m m1 dt">03/11/25 16:19</div><div class="m m1 nm">Alex Rivera</div>
  <div class="c d1">368</div>
  <div class="c d2" style="left:891.500px;width:51px">100%</div>
  <div class="o"><span>87%</span><svg width="15" height="20"><use href="#fire"/></svg></div>
  <div class="c d4">6</div>
  <div class="c hd"><svg width="16" height="18"><use href="#hand"/></svg>1</div>
  <div class="c j"><svg width="13" height="15"><use href="#user"/></svg>1</div>
  <div class="p nf"><svg class="u" width="20" height="16" style="color:#fff"><use href="#userp"/></svg><span style="left:50px">4</span></div>
  <div class="c d8">-</div>
  <svg class="nws" width="22" height="20"><use href="#news"/></svg>
  <svg class="shr" width="21" height="20"><use href="#share"/></svg>
  <svg class="dot" width="8" height="18"><use href="#dots"/></svg>
</div>

<!-- bottom shadow -->
<div class="abs" style="left:460px;top:806px;width:1010px;height:50px;overflow:hidden;pointer-events:none">
  <div style="position:absolute;left:70px;top:62px;width:870px;height:0;box-shadow:0 0 40px 0 rgba(0,0,0,.45);padding-top:30px;border-radius:20px;background:#ccc"></div>
</div>

<!-- help -->
<div class="abs" style="left:1809px;top:758px;width:60px;height:60px;border-radius:26px;background:#2b8d8f;box-shadow:0 4px 12px rgba(0,0,0,.12);color:#dff0f0;font-size:31px;line-height:60px;text-align:center">?</div>
</div>
</body>
</html>
